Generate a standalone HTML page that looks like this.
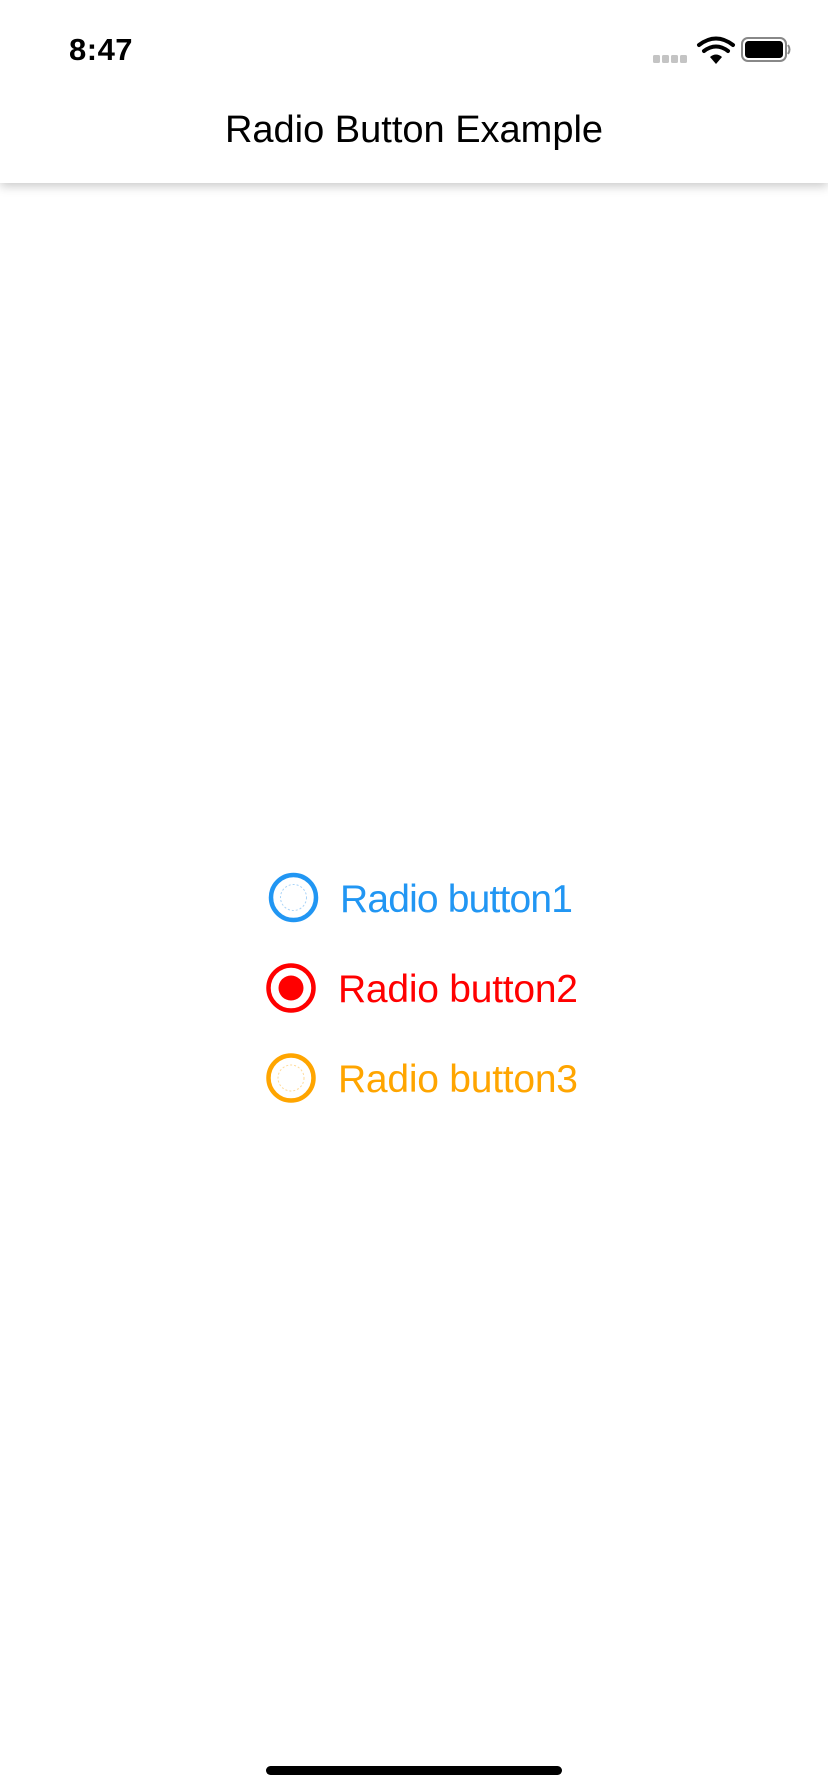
<!DOCTYPE html>
<html><head><meta charset="utf-8"><style>
html,body{margin:0;padding:0;}
body{width:828px;height:1792px;position:relative;background:#fff;overflow:hidden;font-family:"Liberation Sans",sans-serif;}
.hdr{position:absolute;left:0;top:0;width:828px;height:183px;background:#fff;box-shadow:0 3px 10px rgba(0,0,0,0.22);z-index:2;}
.abs{position:absolute;white-space:nowrap;line-height:1;}
</style></head><body>
<div class="hdr">
  <div class="abs" style="left:69px;top:34px;font-size:31px;font-weight:bold;letter-spacing:0.5px;">8:47</div>
  <svg class="abs" style="left:640px;top:30px" width="160" height="50" viewBox="0 0 160 50">
    <g fill="#c4c4c4">
      <rect x="13" y="25" width="7" height="8" rx="1.5"/>
      <rect x="22" y="25" width="7" height="8" rx="1.5"/>
      <rect x="31" y="25" width="7" height="8" rx="1.5"/>
      <rect x="40" y="25" width="7" height="8" rx="1.5"/>
    </g>
    <g fill="none" stroke="#000" stroke-width="4" stroke-linecap="round">
      <path d="M59 15 Q76 2 93 15"/>
      <path d="M64 21 Q76 12 88 21"/>
    </g>
    <path d="M70 27 Q76 22 82 27 L76 34 Z" fill="#000"/>
    <rect x="102" y="8" width="44" height="23" rx="6" fill="none" stroke="#888" stroke-width="2"/>
    <rect x="105" y="11" width="38" height="17" rx="3.5" fill="#000"/>
    <path d="M148 15 Q151 19.5 148 24" fill="none" stroke="#888" stroke-width="2"/>
  </svg>
  <div class="abs" style="left:0;width:828px;text-align:center;top:111px;font-size:38px;">Radio Button Example</div>
</div>

<svg class="abs" style="left:0;top:860px" width="828" height="260" viewBox="0 860 828 260">
  <circle cx="293.5" cy="897.5" r="22.5" fill="none" stroke="#2196F3" stroke-width="4.5"/>
  <circle cx="293.5" cy="897.5" r="13" fill="none" stroke="#a9d3f7" stroke-width="1" stroke-dasharray="2 2"/>
  <circle cx="291" cy="988" r="22.5" fill="none" stroke="#FF0000" stroke-width="4.5"/>
  <circle cx="291" cy="988" r="12.5" fill="#FF0000"/>
  <circle cx="291" cy="1078" r="22.5" fill="none" stroke="#FFA500" stroke-width="4.5"/>
  <circle cx="291" cy="1078" r="13" fill="none" stroke="#ffdb9a" stroke-width="1" stroke-dasharray="2 2"/>
  <text x="340" y="912" font-family="Liberation Sans, sans-serif" font-size="39" fill="#2196F3" textLength="233">Radio button1</text>
  <text x="338" y="1002" font-family="Liberation Sans, sans-serif" font-size="39" fill="#FF0000" textLength="240">Radio button2</text>
  <text x="338" y="1092" font-family="Liberation Sans, sans-serif" font-size="39" fill="#FFA500" textLength="240">Radio button3</text>
</svg>

<div class="abs" style="left:266px;top:1766px;width:296px;height:9px;border-radius:5px;background:#000;"></div>
</body></html>
